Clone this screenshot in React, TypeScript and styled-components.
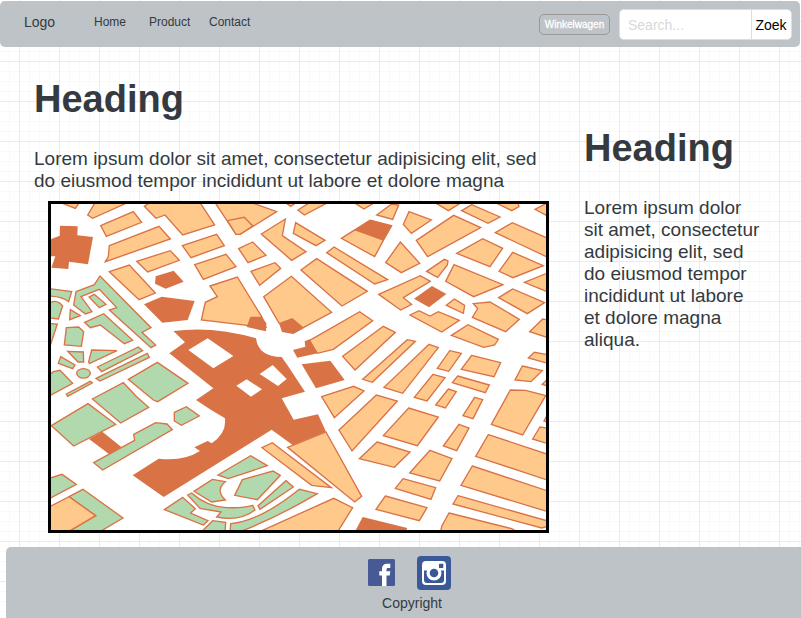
import React from 'react';
import styled, { createGlobalStyle } from 'styled-components';

const GlobalStyle = createGlobalStyle`
  * { box-sizing: border-box; }
  body {
    margin: 0;
    overflow: hidden;
    font-family: 'Liberation Sans', Arial, sans-serif;
    color: #343a40;
    background-color: #fff;
  }
`;

const Page = styled.div`
  display: flex;
  flex-direction: column;
  height: 618px;
  padding-top: 1px;
  overflow: hidden;
  background-color: #fff;
  background-image:
    linear-gradient(#ebebeb 1px, transparent 1px),
    linear-gradient(90deg, #ebebeb 1px, transparent 1px),
    linear-gradient(#f9f9f9 1px, transparent 1px),
    linear-gradient(90deg, #f9f9f9 1px, transparent 1px);
  background-size: 40px 40px, 40px 40px, 10px 10px, 10px 10px;
  background-position: 19px 21px;
`;

const Header = styled.header`
  display: flex;
  align-items: center;
  flex: none;
  width: 800px;
  height: 46px;
  padding: 0 8px 0 24px;
  border-radius: 5px;
  background: #bdc3c7;
`;

const Logo = styled.a`
  width: 70px;
  padding-bottom: 4px;
  font-size: 14px;
  line-height: 16px;
`;

const Nav = styled.nav`
  display: flex;
  flex: 1;
  padding-bottom: 4px;
  font-size: 12px;
  line-height: 14px;
`;

const NavLink = styled.a<{ $width: number }>`
  width: ${(p) => p.$width}px;
`;

const CartButton = styled.button`
  width: 71px;
  height: 21px;
  margin-right: 9px;
  padding: 0;
  border: 1px solid #999;
  border-radius: 5px;
  background: transparent;
  color: #fff;
  font: 10px/19px 'Liberation Sans', Arial, sans-serif;
  -webkit-text-stroke: 0.3px #fff;
`;

const SearchForm = styled.form`
  display: flex;
  width: 173px;
  height: 31px;
  border: 1px solid #ddd;
  border-radius: 5px;
  overflow: hidden;
  background: #fff;
`;

const SearchInput = styled.input`
  width: 132px;
  padding: 2px 8px 0;
  border: 0;
  border-right: 1px solid #ddd;
  outline: 0;
  font: 14px 'Liberation Sans', Arial, sans-serif;
  &::placeholder { color: #d8d8d8; opacity: 1; }
`;

const SearchButton = styled.button`
  flex: 1;
  padding: 2px 1px 0 0;
  border: 0;
  background: #fff;
  color: #000;
  font: 14px 'Liberation Sans', Arial, sans-serif;
`;

const Content = styled.main`
  display: flex;
  flex: none;
  height: 500px;
  padding-left: 34px;
`;

const Article = styled.article`
  width: 550px;
  padding-top: 30px;
`;

const Aside = styled.aside`
  width: 180px;
  padding-top: 79px;
`;

const Heading = styled.h1`
  margin: 0 0 27px;
  font-size: 38px;
  line-height: 44px;
`;

const Text = styled.p`
  margin: 0;
  max-width: 515px;
  font-size: 19px;
  line-height: 22px;
`;

const MapSvg = styled.svg`
  display: block;
  margin: 9px 0 0 14px;
  border: 3px solid #000;
  background: #fff;
`;

const Footer = styled.footer`
  display: flex;
  flex-direction: column;
  align-items: center;
  flex: 1;
  margin-left: 6px;
  padding: 9px 0 0 17px;
  border-radius: 5px 0 0 0;
  background: #bdc3c7;
  font-size: 14px;
  line-height: 16px;
`;

const Socials = styled.div`
  display: flex;
  align-items: flex-start;
  gap: 22px;
  height: 34px;
  margin-bottom: 5px;
  padding-right: 5px;
`;

const FacebookMark = styled.svg`
  margin-top: 3px;
`;

type Kind = 'block' | 'park' | 'landmark' | 'clear';
type Shape = [Kind, string];

const PAINT: Record<Kind, { fill: string; stroke: string }> = {
  block: { fill: '#ffc98b', stroke: '#d97245' },
  park: { fill: '#b2d8ae', stroke: '#d97245' },
  landmark: { fill: '#d97245', stroke: 'none' },
  clear: { fill: '#fff', stroke: 'none' },
};

const NORTH_WEST: Shape[] = [
  ['block', 'M60,22L106,40L120,20Z'],
  ['block', 'M143,60L158,70L280,15L170,15Z'],
  ['block', 'M182,92L280,50L305,82L199,124Z'],
  ['block', 'M208,152L357,94L391,132L196,200L205,185Z'],
  ['block', 'M313,34L340,15L475,15L524,90L428,120L375,60L348,70Z'],
  ['block', 'M427,152L530,118L553,152L453,188Z'],
  ['block', 'M464,209L558,178L588,215L490,253Z'],
  ['block', 'M510,273L592,246L665,365L678,397L622,391L484,375L496,322L532,305Z'],
  ['block', 'M290,199L391,167L418,196L323,231Z'],
  ['block', 'M208,230L268,210L346,294L297,314Z'],
  ['landmark', 'M60,92L113,94L112,121L159,126L144,208L87,200L85,222L34,218L46,184L20,184L20,135L34,132L59,122Z'],
  ['landmark', 'M347,244L401,227L431,260L377,281L345,266Z'],
  ['landmark', 'M312,328L365,305L464,318L443,375L367,383Z'],
  ['park', 'M20,280L95,290L86,320Q65,303 20,303Z'],
  ['park', 'M20,330Q46,307 68,333L55,372L20,368Z'],
  ['park', 'M20,385L52,387L33,445L20,480Z'],
  ['park', 'M91,344L121,362L89,374Z'],
  ['park', 'M79,398L116,396L131,410L124,454L73,450Z'],
  ['park', 'M108,290L163,269L180,243L333,398L306,412L347,450L333,458L208,345L230,338L178,283L123,305L156,350L136,357L101,330Z'],
  ['park', 'M147,306L163,298L198,328L178,338Z'],
  ['park', 'M134,382L191,356L278,436L253,446L181,390L151,398Z'],
  ['park', 'M83,469L130,471L131,501L114,501Z'],
  ['park', 'M155,465L231,467L148,506L146,500Z'],
  ['park', 'M62,485L105,510L98,521L55,505Z'],
  ['park', 'M172,516L295,456L308,467L185,530Z'],
];

const NORTH: Shape[] = [
  ['block', 'M10,15L130,25L200,50L90,118L78,118Z'],
  ['block', 'M52,77L103,67L128,93L90,118L78,118Z'],
  ['block', 'M225,22L242,34L260,22Z'],
  ['block', 'M264,45L300,22L355,22L283,60Z'],
  ['block', 'M154,117L226,72L217,122L288,170L245,196Z'],
  ['block', 'M257,83L345,136L318,152L250,115Z'],
  ['block', 'M86,161L128,141L168,181L114,203Z'],
  ['block', 'M123,229L195,203L212,220L149,271Z'],
  ['block', 'M161,305L244,244L365,352L280,398L250,414L207,384Z'],
  ['landmark', 'M207,384L247,369L282,398L250,417L216,411Z'],
  ['landmark', 'M121,365L155,365L169,385L168,409L110,396Z'],
  ['block', 'M273,225L320,191L472,289L396,333Z'],
  ['block', 'M350,173L372,156L533,254L494,267Z'],
  ['block', 'M394,130L480,76L545,92L520,136L494,185Z'],
  ['landmark', 'M433,106L482,74L545,93L520,137Z'],
  ['block', 'M428,20L462,42L495,22Z'],
  ['block', 'M298,437L449,350L488,377L370,463L322,475Z'],
  ['landmark', 'M249,465L286,455L284,439L299,433L323,475L262,488Z'],
  ['landmark', 'M275,508L361,497L404,555L318,580Z'],
  ['block', 'M398,484L520,394L556,412L435,525Z'],
];

const NORTH_EAST: Shape[] = [
  ['block', 'M-10,60L35,27L56,30L38,73Z'],
  ['block', 'M87,50L154,75L94,115L70,88Z'],
  ['block', 'M160,20L205,47L245,22Z'],
  ['block', 'M245,47L275,29L360,66L324,85Z'],
  ['block', 'M340,20L395,47L417,35L413,20Z'],
  ['block', 'M465,43L505,22L510,67Z'],
  ['block', 'M346,113L397,83L510,133L510,190Z'],
  ['block', 'M109,136L221,61L302,98L143,185Z'],
  ['block', 'M230,175L308,131L368,160L330,215Z'],
  ['block', 'M357,229L398,172L490,212L399,248Z'],
  ['block', 'M61,141L119,205L64,233L17,203Z'],
  ['block', 'M140,229L193,193L204,198L202,210L173,247Z'],
  ['block', 'M222,209L369,269L281,305L197,259Z'],
  ['block', 'M433,262L510,231L510,294Z'],
  ['block', 'M-4,298L121,242L151,259L70,308L95,328L62,345Z'],
  ['landmark', 'M102,311L156,273L199,297L147,337Z'],
  ['block', 'M199,331L223,312L254,331L250,355Z'],
  ['block', 'M280,326L330,321L418,373L377,410L277,367L293,341Z'],
  ['block', 'M356,308L398,282L494,323L442,356Z'],
  ['block', 'M90,360L117,347L150,363L175,350L238,376L185,411Z'],
  ['block', 'M214,421L264,389L355,433L344,450L311,457Z'],
  ['block', 'M449,410L488,372L510,376L510,430Z'],
  ['block', 'M445,489L463,472L510,480L510,507Z'],
];

const SOUTH_WEST: Shape[] = [
  ['landmark', 'M400,-102Q520,-118 648,-80Q655,-24 725,-24L742,0L795,80L725,100L761,164L834,148L858,200L758,240L695,194L371,396L278,331L356,281Q430,290 480,258L463,247L503,228L515,235Q560,205 555,160L510,133L468,105L520,70L388,-35L435,-68Z'],
  ['clear', 'M445,-45L503,-80L580,-27L520,10Z'],
  ['park', 'M110,25A20,14 0 1 1 151,25A20,14 0 1 1 110,25Z'],
  ['park', 'M168,40L322,-35L328,-23L180,48Z'],
  ['park', 'M265,43L352,-8L444,55L353,110L340,105Z'],
  ['park', 'M157,102L250,53L290,95L326,127L242,174Z'],
  ['park', 'M79,87L151,49L157,54L83,94Z'],
  ['park', 'M20,36L40,20L60,16L98,55L20,97Z'],
  ['landmark', 'M147,222L187,200L244,246L208,268Z'],
  ['park', 'M34,182L144,116L227,178L101,243Z'],
  ['park', 'M161,293L284,226L281,208L347,173L381,177L397,194L188,315Z'],
  ['park', 'M403,142L439,125L478,153L424,181L403,168Z'],
  ['park', 'M20,342L66,328L109,358L20,405Z'],
  ['park', 'M87,395L129,373L249,459L180,500L85,500L167,452Z'],
  ['block', 'M20,430L87,395L167,452L85,500L20,500Z'],
  ['park', 'M462,379L517,343L556,350Q525,375 556,405L515,411Z'],
  ['park', 'M443,390L455,384Q500,425 560,428Q610,430 638,421L645,435Q600,470 530,456L543,441L480,430Z'],
  ['park', 'M373,434L428,397L466,431L452,444L504,467L490,480Z'],
  ['park', 'M485,500L518,467L557,472L555,505Z'],
];

const SOUTH: Shape[] = [
  ['clear', 'M79,62L110,43L156,73L123,95Z'],
  ['clear', 'M149,27L188,0L230,42L204,63Z'],
  ['block', 'M335,95L431,64L462,78L373,158Z'],
  ['block', 'M387,195L499,90L562,108L426,258Z'],
  ['block', 'M458,43L592,-76L616,-71L487,52Z'],
  ['block', 'M233,247L348,201L455,394L434,411Z'],
  ['block', 'M156,248L187,233L364,368L305,361Z'],
  ['park', 'M24,330L122,272L172,302L55,341Z'],
  ['park', 'M97,344L189,318L211,331L142,404L74,391Z'],
  ['park', 'M144,422L228,347L250,366L150,433Z'],
  ['park', 'M62,476Q150,468 268,373L322,386Q200,458 90,500L60,505Z'],
  ['block', 'M140,504L371,400L428,428L380,505Z'],
];

const SOUTH_EAST: Shape[] = [
  ['block', 'M147,-62L175,-52L68,85L12,67Z'],
  ['block', 'M209,-43L244,-35L206,19L172,10Z'],
  ['block', 'M275,-29L362,-7L342,35L244,13Z'],
  ['block', 'M427,3L487,17L453,50L405,45Z'],
  ['block', 'M487,58L510,35L510,65Z'],
  ['block', 'M159,28L195,38L141,108L103,97Z'],
  ['block', 'M233,33L328,60L316,83L217,53Z'],
  ['block', 'M205,72L229,80L196,129L167,120Z'],
  ['block', 'M284,97L308,104L279,161L249,152Z'],
  ['block', 'M391,75L437,76L497,92L428,210L334,178Z'],
  ['block', 'M86,129L175,156L112,242L10,212Z'],
  ['block', 'M237,178L267,189L230,257L190,243Z'],
  ['block', 'M458,222L480,186L510,190L510,238Z'],
  ['block', 'M492,168L510,135L510,172Z'],
  ['block', 'M325,209L510,270L510,348L287,274Z'],
  ['block', 'M277,303L510,380L510,442L243,361Z'],
  ['block', 'M234,392L510,470L510,482L485,489L219,417Z'],
  ['block', 'M207,444L395,491L420,505L180,505L186,482Z'],
  ['block', 'M150,256L216,281L179,348L89,324Z'],
  ['block', 'M69,341L167,368L153,403L46,370Z'],
  ['block', 'M16,393L141,428L118,467L-12,433Z'],
  ['block', 'M-9,231L90,261L43,307L-62,281Z'],
  ['landmark', 'M-52,456L82,489L75,505L-78,505Z'],
];

const DISTRICTS: { x: number; y: number; shapes: Shape[] }[] = [
  { x: 40, y: 195, shapes: NORTH_WEST },
  { x: 40, y: 365, shapes: SOUTH_WEST },
  { x: 210, y: 195, shapes: NORTH },
  { x: 380, y: 195, shapes: NORTH_EAST },
  { x: 210, y: 365, shapes: SOUTH },
  { x: 380, y: 365, shapes: SOUTH_EAST },
];

const CityMap = () => (
  <MapSvg width="501" height="332" viewBox="51 204 495 326">
    {DISTRICTS.map(({ x, y, shapes }) => (
      <g key={`${x}-${y}`} transform={`translate(${x} ${y}) scale(0.33333)`} strokeWidth="4">
        {shapes.map(([kind, d]) => (
          <path key={d} d={d} {...PAINT[kind]} />
        ))}
      </g>
    ))}
  </MapSvg>
);

const FacebookIcon = () => (
  <FacebookMark width="27" height="27" viewBox="0 0 27 27">
    <rect width="27" height="27" rx="1.5" fill="#485a96" />
    <path fill="#fff" d="M14 27V16.500h-2.700v-4.200H14V9.500C14 6.200 16 4.700 19 4.700h3.300v4.200H20.200c-1.200 0-1.700.5-1.700 1.600v1.800h3.800l-.6 4.200h-3.200V27z" />
  </FacebookMark>
);

const InstagramIcon = () => (
  <svg width="34" height="34" viewBox="0 0 34 34">
    <rect width="34" height="34" rx="4" fill="#3b5998" />
    <rect x="5" y="5" width="24" height="24" rx="4" fill="#fff" />
    <path fill="#3b5998" d="M7 14.500h3.500a7 7 0 1 0 13 0H27V24a3 3 0 0 1-3 3H10a3 3 0 0 1-3-3z" />
    <circle cx="17" cy="17" r="7.500" fill="#fff" />
    <circle cx="17" cy="17" r="4.300" fill="#3b5998" />
    <rect x="22" y="7.700" width="4.300" height="4.300" rx=".6" fill="#3b5998" />
  </svg>
);

export default function App() {
  return (
    <>
      <GlobalStyle />
      <Page>
        <Header>
          <Logo>Logo</Logo>
          <Nav>
            <NavLink $width={55}>Home</NavLink>
            <NavLink $width={60}>Product</NavLink>
            <NavLink $width={50}>Contact</NavLink>
          </Nav>
          <CartButton>Winkelwagen</CartButton>
          <SearchForm>
            <SearchInput placeholder="Search..." />
            <SearchButton type="button">Zoek</SearchButton>
          </SearchForm>
        </Header>
        <Content>
          <Article>
            <Heading>Heading</Heading>
            <Text>
              Lorem ipsum dolor sit amet, consectetur adipisicing elit, sed do eiusmod tempor
              incididunt ut labore et dolore magna
            </Text>
            <CityMap />
          </Article>
          <Aside>
            <Heading>Heading</Heading>
            <Text>
              Lorem ipsum dolor sit amet, consectetur adipisicing elit, sed do eiusmod tempor
              incididunt ut labore et dolore magna aliqua.
            </Text>
          </Aside>
        </Content>
        <Footer>
          <Socials>
            <FacebookIcon />
            <InstagramIcon />
          </Socials>
          Copyright
        </Footer>
      </Page>
    </>
  );
}
